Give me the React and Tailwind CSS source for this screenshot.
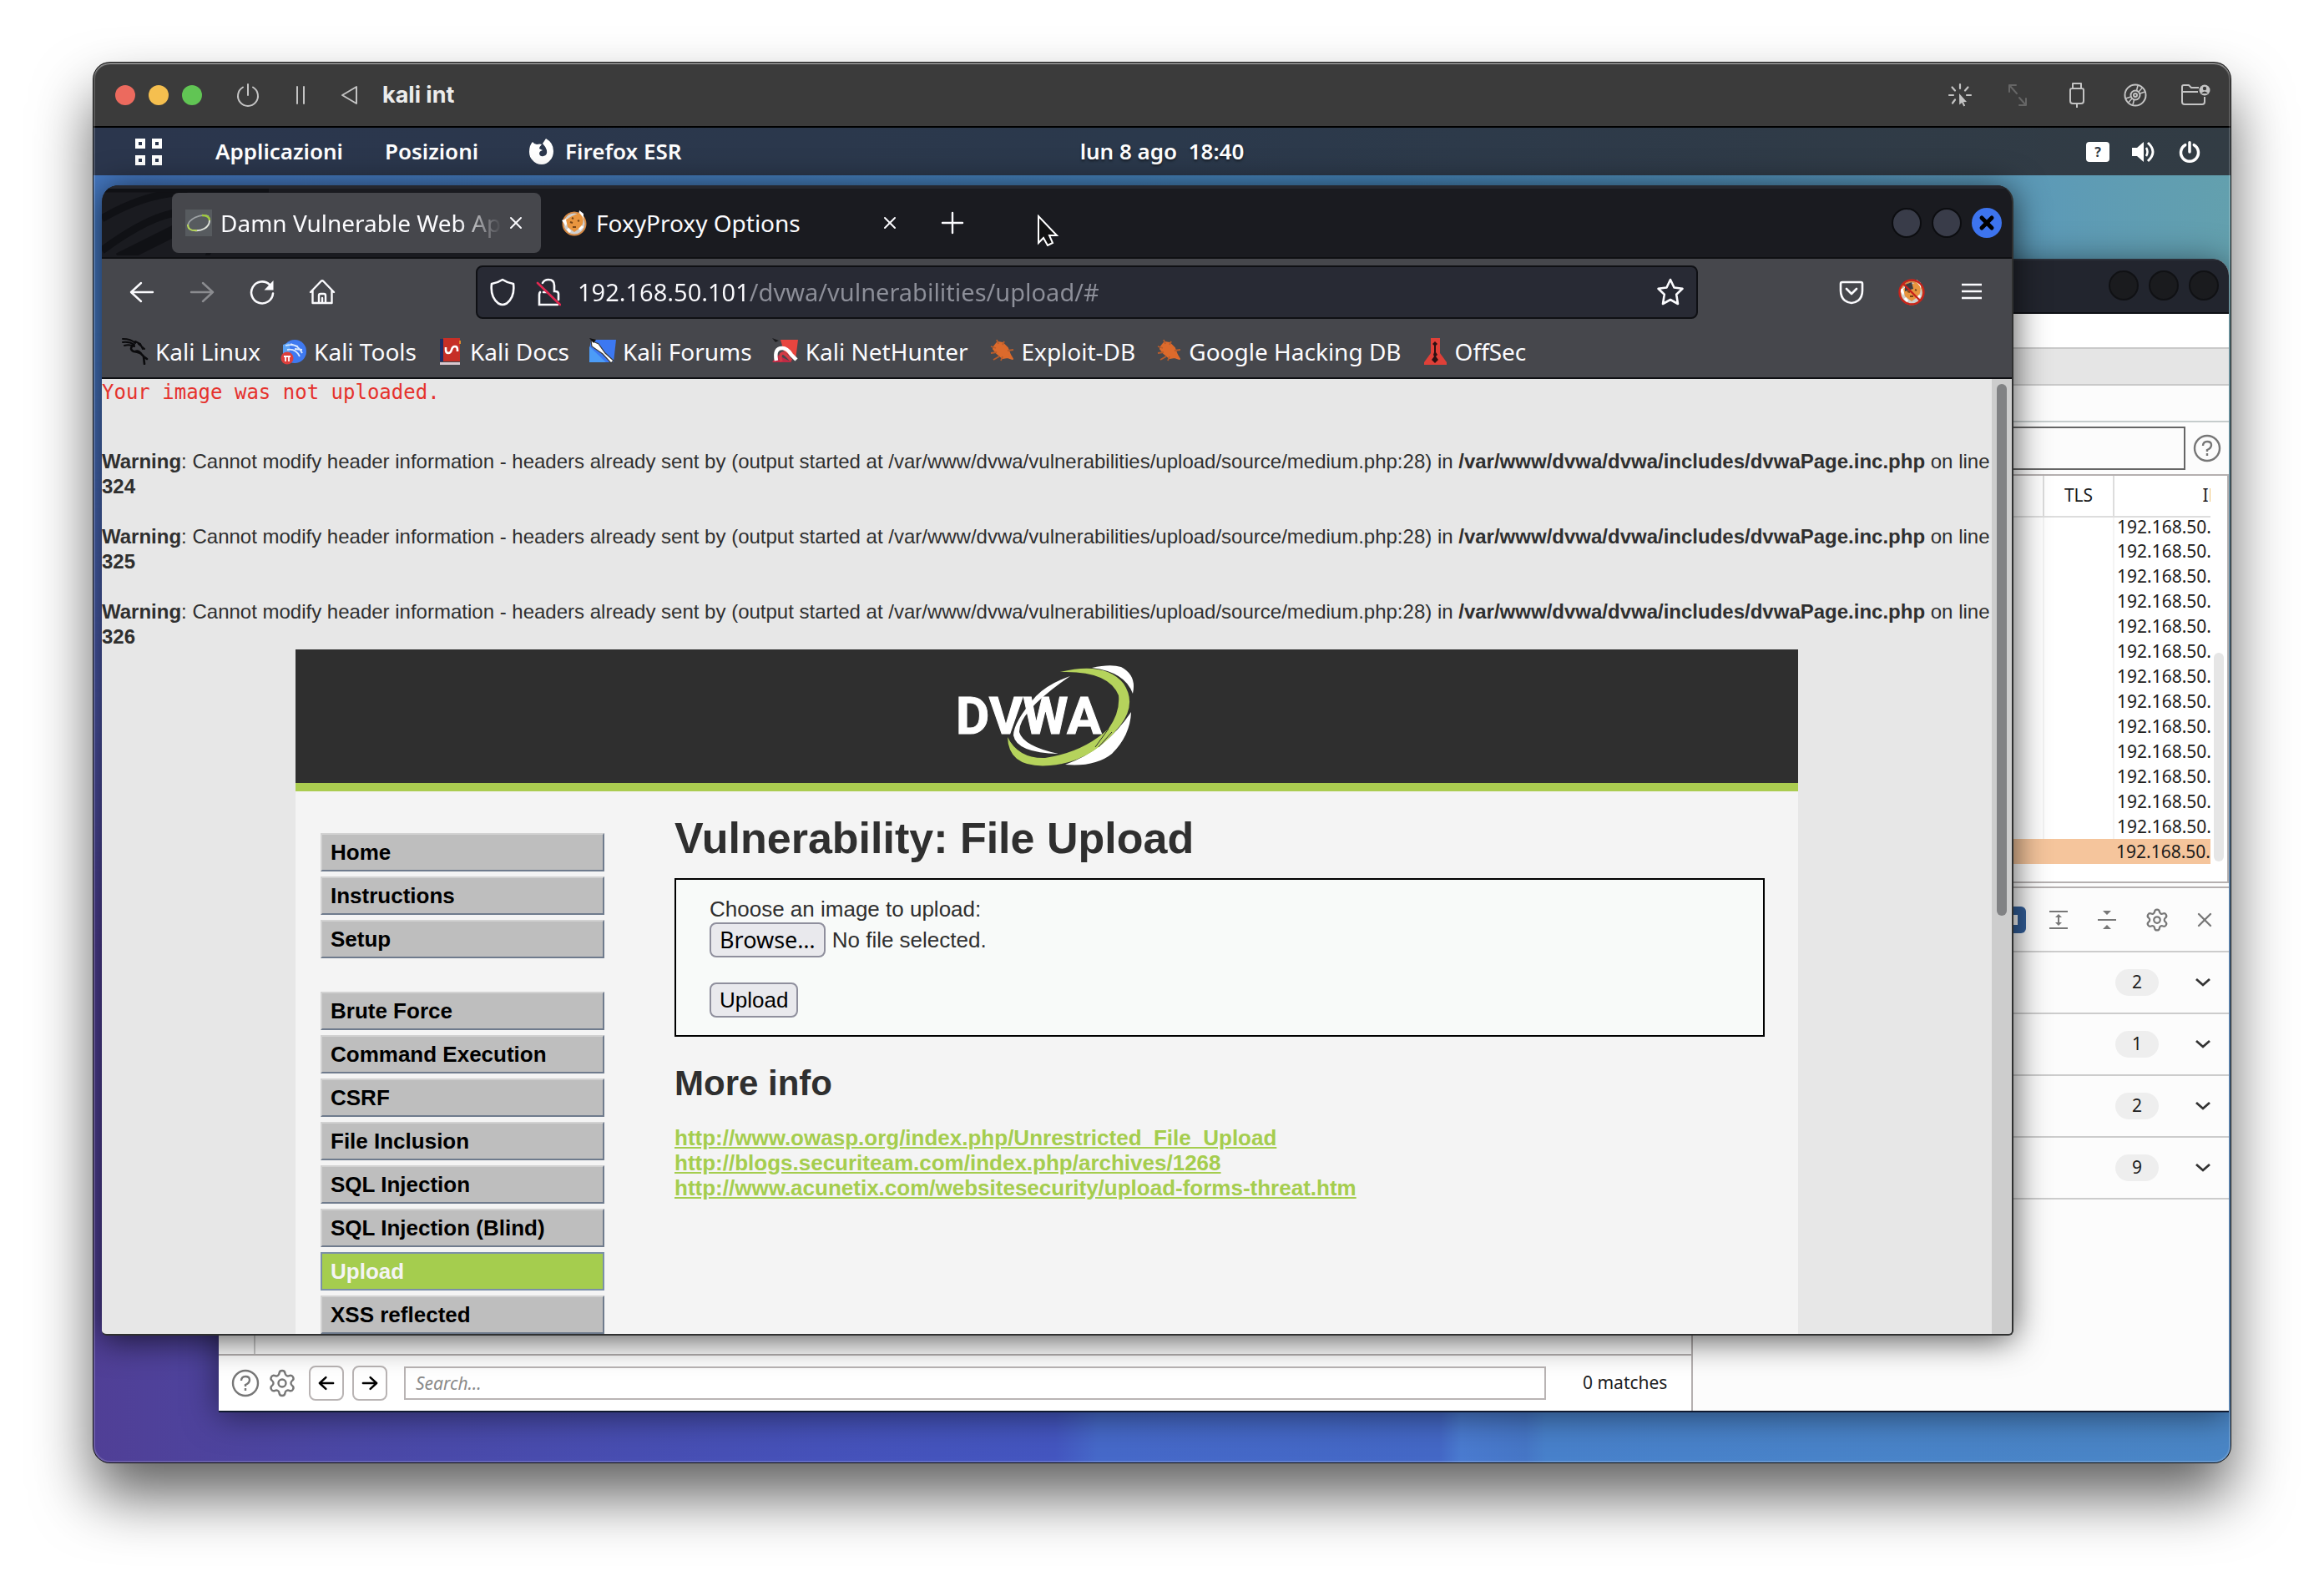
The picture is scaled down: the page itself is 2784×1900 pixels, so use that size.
import React from "react";
import { Settings, X } from "lucide-react";

const uiFont = "font-['Noto_Sans',sans-serif]";

/* ---------- host window icons ---------- */
const Power = ({ className, sw = 2 }) => (
  <svg viewBox="0 0 32 32" className={className} fill="none" stroke="currentColor" strokeWidth={sw} strokeLinecap="round">
    <path d="M16 3v13M10 6.5a12 12 0 1 0 12 0" />
  </svg>
);
const Pause = () => (
  <svg viewBox="0 0 16 24" className="h-6 w-4" stroke="currentColor" strokeWidth="2" strokeLinecap="round">
    <path d="M4 2v20M12 2v20" />
  </svg>
);
const Triangle = () => (
  <svg viewBox="0 0 22 24" className="h-6 w-[22px]" fill="none" stroke="currentColor" strokeWidth="2" strokeLinejoin="round">
    <path d="M19 2v20L2 12z" />
  </svg>
);
const Spark = () => (
  <svg viewBox="0 0 32 32" className="size-8" fill="none" stroke="currentColor" strokeWidth="2.2" strokeLinecap="round">
    <path d="M16 3v5M3 16h5M24 16h5M6.5 6.5l3.5 4M25.500 6.500l-3.500 4M10 21.500l-3 4" />
    <path d="M15 14l9 10-4 .3 2.200 4.200-1.800.9-2.200-4.400-3 2.500z" fill="currentColor" stroke="none" />
  </svg>
);
const Diagonal = () => (
  <svg viewBox="0 0 32 32" className="size-8 text-[#666]" fill="none" stroke="currentColor" strokeWidth="2" strokeLinecap="round" strokeLinejoin="round">
    <path d="M13 4H5v8M5 4l9 10M17 28h8v-8M25 28l-8-9" />
  </svg>
);
const Usb = () => (
  <svg viewBox="0 0 32 32" className="size-8" fill="none" stroke="currentColor" strokeWidth="2" strokeLinejoin="round">
    <path d="M11 8V2h10v6M8 10q0-2 2-2h12q2 0 2 2v13q0 3-3 3H11q-3 0-3-3zM16 26v5" />
  </svg>
);
const Disc = () => (
  <svg viewBox="0 0 32 32" className="size-8" fill="none" stroke="currentColor" strokeWidth="2">
    <circle cx="16" cy="16" r="12.500" />
    <circle cx="16" cy="16" r="5.500" />
    <circle cx="16" cy="16" r="2" />
    <path d="M19 4.500l-1.500 6M24.500 7l-4.500 5M13 27.500l1.500-6M7.500 25l4.500-5M4.500 20l6-2M27.500 12l-6 2" strokeWidth="1.600" />
  </svg>
);
const SharedFolder = () => (
  <svg viewBox="0 0 36 32" className="h-8 w-9" fill="none" stroke="currentColor" strokeWidth="2" strokeLinejoin="round">
    <path d="M22 7H13l-3-3H4q-2 0-2 2v18q0 3 3 3h21q3 0 3-3v-6M2 12h19" />
    <circle cx="29" cy="10" r="6.500" fill="currentColor" stroke="none" />
    <circle cx="29" cy="8" r="2.200" fill="#3b3b3b" stroke="none" />
    <path d="M25 14q4-5 8 0z" fill="#3b3b3b" stroke="none" />
  </svg>
);

/* ---------- guest panel icons ---------- */
const Grid = () => (
  <svg viewBox="0 0 32 32" className="size-8" fill="none" stroke="#fff" strokeWidth="4">
    <path d="M2 2h8v8H2zM22 2h8v8h-8zM2 22h8v8H2zM22 22h8v8h-8z" />
  </svg>
);
const FirefoxGlyph = () => (
  <svg viewBox="0 0 32 32" className="size-8">
    <path d="M5 4q2 3 5 3 4-1 6 0-3 3-3 5l4 2q-4 1-4 4 1 4 5 3 5-1 4-7-1-4-5-8 2-3 4-6 9 5 9 15 0 7-4 11-4 5-10 5-7 0-11-5Q1 22 1 16 1 8 5 4z" fill="#fff" />
  </svg>
);
const Volume = () => (
  <svg viewBox="0 0 30 30" className="h-[30px] w-[30px]" fill="none" stroke="#fff">
    <path d="M1 10h6l8-7v24l-8-7H1z" fill="#fff" stroke="none" />
    <path d="M18 10q3 5 0 10" strokeWidth="2.500" />
    <path d="M20 4q12 11 0 22" strokeWidth="3" />
  </svg>
);

/* ---------- browser icons ---------- */
const Arrow = ({ flip, className }) => (
  <svg viewBox="0 0 32 32" className={className} fill="none" stroke="currentColor" strokeWidth="2.400" strokeLinecap="round" strokeLinejoin="round">
    <path d={flip ? "M3 16h26M17 5l12 11-12 11" : "M29 16H3M15 5L3 16l12 11"} />
  </svg>
);
const Reload = () => (
  <svg viewBox="0 0 32 32" className="size-8" fill="none" stroke="currentColor" strokeWidth="2.600" strokeLinecap="round">
    <path d="M29 17.500A13 13 0 1 1 25 7" />
    <path d="M29.500 2v11.500H18.500z" fill="currentColor" stroke="none" />
  </svg>
);
const Home = () => (
  <svg viewBox="0 0 32 32" className="size-8" fill="none" stroke="currentColor" strokeWidth="2.400" strokeLinecap="round" strokeLinejoin="round">
    <path d="M2 16L14.500 3q1.500-1.500 3 0L30 16M4.500 14v15h23V14M12 29V20q0-2 2-2h4q2 0 2 2v9M16 28v-5" />
  </svg>
);
const Shield = () => (
  <svg viewBox="0 0 32 34" className="h-[34px] w-8" fill="none" stroke="currentColor" strokeWidth="2.600" strokeLinejoin="round">
    <path d="M16 2Q10 6 3 7q-2 16 8 23.500Q14 32 16 32t5-1.500Q31 23 29 7q-7-1-13-5z" />
  </svg>
);
const LockOff = () => (
  <svg viewBox="0 0 30 34" className="h-[34px] w-[30px]" fill="none" stroke="currentColor" strokeWidth="2.600" strokeLinecap="round">
    <path d="M8 6q2-4 7-4 7 0 7 7v7h1q4 0 4 3v7M5 17q-1 1-1 3v12h22M9 17h4" />
    <path d="M2 6l27 26" stroke="#e22850" />
  </svg>
);
const Star = () => (
  <svg viewBox="0 0 34 34" className="size-[34px]" fill="none" stroke="currentColor" strokeWidth="2.600" strokeLinejoin="round">
    <path d="M17 2l4.500 9.500 10 1.300-7.300 7 1.800 11.200L17 26l-9 5 1.800-11.200-7.300-7 10-1.300z" />
  </svg>
);
const Pocket = () => (
  <svg viewBox="0 0 32 32" className="size-8" fill="none" stroke="currentColor" strokeWidth="2.600" strokeLinecap="round" strokeLinejoin="round">
    <path d="M5 4h22q2 0 2 2v8q0 8-5 12-8 6-16 0-5-4-5-12V6q0-2 2-2zM10 12l6 6 6-6" />
  </svg>
);
const Burger = () => (
  <svg viewBox="0 0 32 32" className="size-8" stroke="currentColor" strokeWidth="2.600">
    <path d="M4 7h24M4 15h24M4 23h24" />
  </svg>
);
const Plus = () => (
  <svg viewBox="0 0 32 32" className="size-8" stroke="currentColor" strokeWidth="2.400" strokeLinecap="round">
    <path d="M16 4v24M4 16h24" />
  </svg>
);
const DvwaIcon = () => (
  <svg viewBox="0 0 32 32" className="size-8" fill="none">
    <path d="M0 0h32v32H0z" fill="#575b5f" />
    <path d="M3 20C3 12 18 4 28 8" stroke="#9ea3a5" strokeWidth="1.800" />
    <path d="M20 7q9 0 9 6" stroke="#9fc93f" strokeWidth="2.400" />
    <path d="M29 13c0 9-10 13-18 12" stroke="#dfe3da" strokeWidth="2" />
    <path d="M3 18q0 8 11 7" stroke="#b7d65c" strokeWidth="2" />
  </svg>
);
const FoxIcon = ({ off }) => (
  <svg viewBox="0 0 32 32" className="size-8">
    <circle cx="16" cy="17" r="13" fill="#cfcfcf" />
    <circle cx="16" cy="17" r="13.500" fill="none" stroke="#d88b45" strokeWidth="2" />
    <path d="M1 13l8-3-3 10zM22 1l5 4v6l-6-3z" fill="#fff" />
    <path d="M6 12l7-4 9-4 4 5q2 8-3 13l-7 5-8-6z" fill="#e8953f" />
    <path d="M11 15l3 1M20 13l2 1M14 21h4M13 10l2 1" stroke="#754417" strokeWidth="2" />
    <path d="M22 24l4-4M8 23l3 4" stroke="#fff" strokeWidth="3" />
    {off && (
      <g fill="none" stroke="#c8231b" strokeWidth="2.400">
        <path d="M8 7l8-3 2 8-10 3z" fill="#3b3c42" stroke="none" />
        <circle cx="16" cy="16" r="14.500" />
        <path d="M6 6l20 20" />
      </g>
    )}
  </svg>
);
const icons = {
  linux: (
    <svg viewBox="0 0 32 32" className="size-8" fill="none" stroke="#0b0b0d" strokeLinecap="round">
      <path d="M1 1q10 0 15 5M1 5q8-1 14 3M3 9q6-2 12 1M16 4l6 3 3 6M20 7l7 6" strokeWidth="2" />
      <path d="M14 8q-6 5 0 8 9 1 12 6l4 3M26 22l1 9M16 16q4-2 8 4" strokeWidth="2.600" />
    </svg>
  ),
  tools: (
    <svg viewBox="0 0 32 32" className="size-8">
      <circle cx="17" cy="16" r="14" fill="#3f79f0" />
      <path d="M3 20V8l8-3v18z" fill="#5aa2f5" />
      <path d="M6 9q14-4 20 9M8 14q10-2 15 8M17 13l9 1M12 7l9 3" fill="none" stroke="#dbe9ff" strokeWidth="1.800" />
      <circle cx="8" cy="24" r="7.500" fill="#dc3f3c" />
      <path d="M4 22h8M6 22v6M10 22v6" stroke="#fff" strokeWidth="1.800" />
    </svg>
  ),
  docs: (
    <svg viewBox="0 0 32 32" className="size-8">
      <path d="M4 1h4v27H4z" fill="#1f2c66" />
      <path d="M8 0h20v28H8z" fill="#c62f27" />
      <path d="M27 3h2v4h-2z" fill="#e08a2c" />
      <path d="M4 29h24v3H4z" fill="#d9c8cf" />
      <path d="M11 11v3q0 4 3 4t4-4 4-4 3 4v2" fill="none" stroke="#fff" strokeWidth="2.600" />
    </svg>
  ),
  forums: (
    <svg viewBox="0 0 32 32" className="size-8">
      <path d="M2 2h30l-3 27H0V14z" fill="#3c78f2" />
      <path d="M0 10v19h20z" fill="#4c9cf7" />
      <path d="M2 3l9 4 8 11 10 9-3 3-10-11L3 10z" fill="#fff" stroke="#3a3a3a" strokeWidth="1.200" />
      <path d="M0 0l8 2-3 4z" fill="#111" />
    </svg>
  ),
  nethunter: (
    <svg viewBox="0 0 32 32" className="size-8">
      <path d="M10 2h21l-3 24-14-10z" fill="#e8453f" />
      <path d="M0 29l6-9 18 9z" fill="#c02a45" />
      <path d="M5 27q-3-15 7-15 6 0 11 8l6 6" fill="none" stroke="#fff" strokeWidth="4.500" />
      <path d="M11 28q-3-9 2-10 3 1 10 9" fill="none" stroke="#d43a44" strokeWidth="3.500" />
      <path d="M0 0l8 3-4 2z" fill="#1b1b1d" />
    </svg>
  ),
  exploit: (
    <svg viewBox="0 0 32 32" className="size-8">
      <path d="M7 10l4-5 6 1 6 6 3 8 3 5-6-2-6 1-7-6-4-5z" fill="#dc6a2c" stroke="#dc6a2c" strokeWidth="2" strokeLinejoin="round" />
      <path d="M3 10l6 2M3 18l7-1M6 26l7-4M15 27l2-5M10 2l2 5M19 4l-2 4M30 14l-7 1" stroke="#b85c2b" strokeWidth="1.800" />
    </svg>
  ),
  offsec: (
    <svg viewBox="0 0 32 32" className="size-8">
      <path d="M11 0h11v18l8 11v3H3v-3l8-11z" fill="#df4038" />
      <path d="M16 4l3 3-2 2v8l2 3-2 2 3 4-4 4-4-4 3-4-1-2 1-3V9l-2-2z" fill="#2b1012" />
    </svg>
  ),
};
const bookmarks = [
  ["linux", "Kali Linux"],
  ["tools", "Kali Tools"],
  ["docs", "Kali Docs"],
  ["forums", "Kali Forums"],
  ["nethunter", "Kali NetHunter"],
  ["exploit", "Exploit-DB"],
  ["exploit", "Google Hacking DB"],
  ["offsec", "OffSec"],
];

const DvwaLogo = () => (
  <svg viewBox="-4 0 220 122" className="h-[122px] w-[220px]" role="img" aria-label="DVWA">
    <g fill="#fff">
      <path d="M134 13Q108 22 93 37 66 68 66 84 70 105 120 106 78 97 73 80 72 56 134 13z" />
      <path d="M160 3Q182-2 195 2 214 12 209 34 200 8 160 3z" />
      <path d="M207 56Q206 84 184 106 164 122 128 119 176 102 207 56z" />
    </g>
    <path d="M122 8Q176-5 198 22 214 46 194 72 160 116 110 120 60 124 59 86 72 112 104 111 150 104 180 76 194 56 192 36 180 6 122 8z" fill="#b5d35c" />
    <path d="M180 76l-16 22M184 80l-16 18" stroke="#2f2f2f" />
    <text x="-3" y="82" fill="#fff" stroke="#fff" strokeWidth="1" className="font-['Roboto',sans-serif] text-[62px] font-bold">DVWA</text>
  </svg>
);

const warnings = [324, 325, 326];
const menu = [
  ["Home", "Instructions", "Setup"],
  ["Brute Force", "Command Execution", "CSRF", "File Inclusion", "SQL Injection", "SQL Injection (Blind)", "Upload", "XSS reflected"],
];
const links = [
  "http://www.owasp.org/index.php/Unrestricted_File_Upload",
  "http://blogs.securiteam.com/index.php/archives/1268",
  "http://www.acunetix.com/websitesecurity/upload-forms-threat.htm",
];

function DvwaPage() {
  return (
    <main className="min-w-0 flex-1 overflow-hidden bg-[#e7e7e7] font-['Liberation_Sans',Arial,sans-serif] text-[#2f2f2f]">
      <pre className="mb-[52px] font-['DejaVu_Sans_Mono',monospace] text-2xl leading-[32px] text-[#e5322d]">Your image was not uploaded.</pre>
      <div className="flex flex-col gap-[30px] text-2xl leading-[30px]">
        {warnings.map((n) => (
          <p key={n}>
            <b>Warning</b>: Cannot modify header information - headers already sent by (output started at /var/www/dvwa/vulnerabilities/upload/source/medium.php:28) in <b>/var/www/dvwa/dvwa/includes/dvwaPage.inc.php</b> on line <b>{n}</b>
          </p>
        ))}
      </div>
      <div className="mx-auto max-w-[1800px] bg-[#f4f4f4] text-[26px] leading-[30px]">
        <header className="flex h-[170px] items-center justify-center border-b-[10px] border-[#abcc50] bg-[#2f2f2f]">
          <DvwaLogo />
        </header>
        <div className="flex items-start gap-[84px] pt-[26px] pr-10 pl-[30px]">
          <nav className="flex w-[340px] shrink-0 flex-col gap-10 pt-6 font-bold">
            {menu.map((group) => (
              <ul key={group[0]} className="flex flex-col gap-[6px]">
                {group.map((m) => (
                  <li key={m}>
                    <a
                      href="#"
                      className={
                        m === "Upload"
                          ? "block h-[46px] border-2 border-[#7b8fa8] bg-[#a5cd4e] px-[10px] leading-[42px] text-[#f4f4f4]"
                          : "block h-[46px] border-2 border-t-[#d2d2d2] border-r-[#6f7b8d] border-b-[#6f7b8d] border-l-[#d2d2d2] bg-[#bebebe] px-[10px] leading-[42px] text-black"
                      }
                    >
                      {m}
                    </a>
                  </li>
                ))}
              </ul>
            ))}
          </nav>
          <section className="min-w-0 flex-1">
            <h1 className="mb-[18px] text-[52px] leading-[60px] font-bold">Vulnerability: File Upload</h1>
            <form className="h-[190px] border-2 border-black bg-[#f8faf9] px-10 pt-[19px] text-[26px]" onSubmit={(e) => e.preventDefault()}>
              <p className="leading-8">Choose an image to upload:</p>
              <div className="flex items-center gap-2">
                <input id="file" type="file" className="sr-only" />
                <label htmlFor="file" className="flex h-[42px] items-center rounded-lg border-2 border-[#8f8f9d] bg-[#e9e9ed] px-[10px] font-['Noto_Sans',sans-serif] text-[27px] text-black">Browse…</label>
                <span>No file selected.</span>
              </div>
              <button className="mt-[30px] flex h-[42px] items-center rounded-lg border-2 border-[#8f8f9d] bg-[#e9e9ed] px-[10px] text-black">Upload</button>
            </form>
            <h2 className="mt-8 mb-[26px] text-[42px] leading-[48px] font-bold">More info</h2>
            <ul className="font-bold text-[#a5cd4e]">
              {links.map((l) => (
                <li key={l}>
                  <a href={l} className="underline">{l}</a>
                </li>
              ))}
            </ul>
          </section>
        </div>
      </div>
    </main>
  );
}

function Browser() {
  return (
    <section className={`absolute top-3 right-[260px] bottom-[152px] left-[10px] flex flex-col overflow-hidden rounded-t-[20px] rounded-b-[6px] border-r-2 border-b-2 border-[#2f3030] bg-[#46474c] text-[28px] text-[#fbfbfe] shadow-[0_4px_40px_rgba(0,0,0,0.7)] ${uiFont}`}>
      <div className="relative flex h-[88px] shrink-0 items-center border-t-4 border-b-2 border-t-[#25272e] border-b-[#0f1013] bg-[#1a1b20] pl-[84px]">
        <svg className="absolute top-0 left-0 h-20 w-[200px]" viewBox="0 0 200 80" fill="none" stroke="#101115">
          <path d="M0 36Q50 6 100 4M0 74Q60 30 96 28" strokeWidth="9" />
          <path d="M0 2h200M94 0l10 10M124 84l14-24" strokeWidth="5" />
          <path d="M20 84l80-40" strokeWidth="14" />
        </svg>
        <div className="relative flex h-[72px] w-[442px] items-center gap-[10px] rounded-lg bg-[#46474c] pl-4">
          <DvwaIcon />
          <span className="w-[340px] overflow-hidden whitespace-nowrap [mask-image:linear-gradient(to_right,black_84%,transparent_99%)]">Damn Vulnerable Web App</span>
          <button aria-label="Close tab" className="-ml-2"><X className="size-6" strokeWidth={2} /></button>
        </div>
        <div className="flex h-[72px] w-[454px] items-center gap-[10px] pl-6">
          <FoxIcon />
          <span className="w-[330px]">FoxyProxy Options</span>
          <button aria-label="Close tab"><X className="size-6" strokeWidth={2} /></button>
        </div>
        <button aria-label="New tab" className="ml-[23px]"><Plus /></button>
        <div className="mr-3 ml-auto flex gap-3">
          <button aria-label="Minimize" className="size-9 rounded-full border-2 border-[#0c0d10] bg-[#393c49]" />
          <button aria-label="Maximize" className="size-9 rounded-full border-2 border-[#0c0d10] bg-[#393c49]" />
          <button aria-label="Close" className="grid size-9 place-items-center rounded-full bg-[#3d74ee] text-black"><X className="size-6" strokeWidth={5} /></button>
        </div>
      </div>
      <div className="flex h-20 shrink-0 items-center">
        <div className="ml-8 flex w-[438px] items-center gap-10">
          <button aria-label="Back"><Arrow className="size-8" /></button>
          <button aria-label="Forward" className="text-[#8b8c90]"><Arrow flip className="size-8" /></button>
          <button aria-label="Reload"><Reload /></button>
          <button aria-label="Home"><Home /></button>
        </div>
        <div className="-ml-[22px] flex h-16 max-w-[1464px] min-w-0 flex-1 items-center rounded-lg border-2 border-[#0f1014] bg-[#282a34] px-[14px]">
          <Shield />
          <span className="ml-6"><LockOff /></span>
          <input
            aria-label="Address"
            defaultValue="192.168.50.101/dvwa/vulnerabilities/upload/#"
            className="mx-5 min-w-0 flex-1 bg-[linear-gradient(to_right,#fbfbfe_206px,#8d8f99_206px)] bg-clip-text text-[29px] text-transparent outline-none"
          />
          <Star />
        </div>
        <div className="mr-8 ml-auto flex gap-10">
          <button aria-label="Pocket"><Pocket /></button>
          <button aria-label="FoxyProxy"><FoxIcon off /></button>
          <button aria-label="Menu"><Burger /></button>
        </div>
      </div>
      <nav className="flex h-16 shrink-0 items-center gap-6 border-b-2 border-[#0f1013] pl-6 whitespace-nowrap">
        {bookmarks.map(([icon, label]) => (
          <a key={label} href="#" className="flex items-center gap-2">
            {icons[icon]}
            {label}
          </a>
        ))}
      </nav>
      <div className="flex min-h-0 flex-1">
        <DvwaPage />
        <div className="w-6 shrink-0 bg-[#cdcdcd] px-[6px] pt-[6px]">
          <div className="h-[56%] rounded-full bg-[#818284]" />
        </div>
      </div>
      <svg className="absolute top-[35px] left-[1120px] h-[38px] w-7" viewBox="0 0 28 38">
        <path d="M2 2v32l6-6 5 9 6-3-4-9h9z" fill="#111" stroke="#fff" strokeWidth="2" />
      </svg>
    </section>
  );
}

const Help = () => (
  <svg viewBox="0 0 34 34" className="size-[34px] shrink-0" fill="none" stroke="#777" strokeWidth="2.400">
    <circle cx="17" cy="17" r="15" />
    <path d="M12 14q0-5 5-5t5 4-5 6v2M17 23v3" />
  </svg>
);
const ExpandAll = () => (
  <svg viewBox="0 0 26 26" className="size-[26px]" fill="#777">
    <path d="M2 2h22v2H2zM2 22h22v2H2zM13 6l4 4h-3v6h3l-4 4-4-4h3v-6H9z" />
  </svg>
);
const CollapseAll = () => (
  <svg viewBox="0 0 26 26" className="size-[26px]" fill="#777">
    <path d="M2 12h22v2H2zM8 2h10l-5 5zM8 24h10l-5-5z" />
  </svg>
);
const Chevron = () => (
  <svg viewBox="0 0 20 14" className="h-[14px] w-5" fill="none" stroke="#333" strokeWidth="2.800">
    <path d="M2 3l8 7 8-7" />
  </svg>
);

function Proxy() {
  return (
    <section className={`absolute top-[100px] right-[2px] bottom-[60px] left-[150px] flex flex-col overflow-hidden rounded-t-[20px] border-b-2 border-[#101a30] bg-white text-[21px] text-[#1d1d1d] shadow-[0_4px_40px_rgba(0,0,0,0.5)] ${uiFont}`}>
      <div className="flex h-[66px] shrink-0 items-start justify-end gap-3 border-t-2 border-b-2 border-t-[#2b303a] border-b-[#0f1116] bg-[#22252e] pt-3 pr-3">
        {["Minimize", "Maximize", "Close"].map((l) => (
          <button key={l} aria-label={l} className="size-9 rounded-full border-2 border-[#101114] bg-[#1a1b1e]" />
        ))}
      </div>
      <div className="h-[42px] shrink-0 border-b-2 border-[#c9c9c9]" />
      <div className="h-11 shrink-0 border-b-2 border-[#c9c9c9] bg-[#e5e5e5]" />
      <div className="h-11 shrink-0 border-b-2 border-[#c5cccc] bg-[#fcfcfc]" />
      <div className="flex h-16 shrink-0 items-center gap-[9px] border-b-2 border-[#b5b0b0] bg-[#fcfcfc] pr-[9px]">
        <input aria-label="Filter" className="h-[52px] min-w-0 flex-1 border-2 border-[#666] bg-[#fcfcfc]" />
        <Help />
      </div>
      <div className="flex h-[488px] shrink-0 border-r-2 border-b-2 border-[#b5b0b0]">
        <div className="min-w-0 flex-1 overflow-hidden">
          <table className="w-[calc(100%+116px)] table-fixed border-collapse">
            <thead>
              <tr className="h-[49px] border-b-2 border-[#ddd]">
                <th className="border-r-2 border-[#ddd]" />
                <th className="w-[84px] border-r-2 border-[#ddd] font-normal">TLS</th>
                <th className="w-[232px] font-normal">IP</th>
              </tr>
            </thead>
            <tbody>
              {Array.from({ length: 14 }, (_, i) => (
                <tr key={i} className={i === 13 ? "bg-[#f5c59c]" : ""}>
                  <td className={i === 13 ? "p-0" : "border-r-2 border-[#f4f4f4] p-0"} />
                  <td className={i === 13 ? "p-0" : "border-r-2 border-[#f4f4f4] p-0"} />
                  <td className={i === 0 ? "h-[26px] py-0 pl-[3px] align-top leading-[22px]" : "h-[30px] py-0 pl-[3px] leading-[30px]"}>192.168.50.</td>
                </tr>
              ))}
            </tbody>
          </table>
        </div>
        <div className="flex w-5 flex-col items-center justify-end pb-6">
          <div className="h-[250px] w-3 rounded-full bg-[#e6e6e6]" />
        </div>
      </div>
      <div className="flex min-h-0 flex-1">
        <div className="flex min-w-0 flex-1 flex-col">
          <div className="flex-1 border-b-2 border-[#b5b0b0] pl-[42px]">
            <div className="h-full border-l-2 border-[#ccc]" />
          </div>
          <div className="flex h-[66px] shrink-0 items-center pl-[15px]">
            <button aria-label="Help"><Help /></button>
            <button aria-label="Settings" className="ml-[9px]"><Settings className="size-9 text-[#777]" strokeWidth={1.6} /></button>
            <button aria-label="Previous" className="ml-[14px] grid h-[42px] w-[42px] place-items-center rounded-lg border-2 border-[#b9b4b4] text-black"><Arrow className="size-5 [stroke-width:4]" /></button>
            <button aria-label="Next" className="ml-[10px] grid h-[42px] w-[42px] place-items-center rounded-lg border-2 border-[#b9b4b4] text-black"><Arrow flip className="size-5 [stroke-width:4]" /></button>
            <input aria-label="Search" placeholder="Search…" className="ml-5 h-10 min-w-0 flex-1 border-2 border-[#b9b4b4] bg-white px-3 italic placeholder:text-[#8a8a8a]" />
            <span className="w-[174px] pl-[44px]">0 matches</span>
          </div>
        </div>
        <aside className="w-[644px] shrink-0 border-l-2 border-[#b5b0b0] bg-[#fcfcfc]">
          <div className="mt-1 flex h-[79px] items-center justify-end gap-8 border-t-2 border-b-2 border-t-[#b5b0b0] border-b-[#ccc] pr-[15px]">
            <button aria-label="Panel layout" className="mr-[-6px] grid size-8 place-items-center rounded-md bg-[#33609c]"><span className="block size-3 bg-white" /></button>
            <button aria-label="Expand all"><ExpandAll /></button>
            <button aria-label="Collapse all"><CollapseAll /></button>
            <button aria-label="Settings" className="-mr-1"><Settings className="size-[30px] text-[#777]" strokeWidth={1.8} /></button>
            <button aria-label="Close panel"><X className="size-7 text-[#777]" strokeWidth={2} /></button>
          </div>
          {["2", "1", "2", "9"].map((n, i) => (
            <button key={i} className="flex h-[74px] w-full items-center justify-end border-b-2 border-[#ccc] pr-[21px]">
              <span className="mr-[43px] flex h-8 w-[52px] items-center justify-center rounded-full bg-[#eee]">{n}</span>
              <Chevron />
            </button>
          ))}
        </aside>
      </div>
    </section>
  );
}

export default function App() {
  return (
    <div className="flex min-h-screen bg-white px-28 pt-[75px] pb-[148px]">
      <div className="relative flex flex-1 flex-col overflow-hidden rounded-[20px] bg-[#3b3b3b] shadow-[0_0_0_1px_#111,0_40px_70px_rgba(0,0,0,0.62)]">
        <header className="flex h-[78px] shrink-0 items-center border-b-2 border-black pt-[2px] pr-6 pl-[26px] text-[#c4c4c4]">
          <div className="flex gap-4">
            <button aria-label="Close window" className="size-6 rounded-full bg-[#ec6a5e]" />
            <button aria-label="Minimize window" className="size-6 rounded-full bg-[#f5bf4f]" />
            <button aria-label="Zoom window" className="size-6 rounded-full bg-[#61c554]" />
          </div>
          <button aria-label="Shut down" className="ml-[39px]"><Power className="size-8" /></button>
          <button aria-label="Pause" className="ml-[39px]"><Pause /></button>
          <button aria-label="Start" className="ml-10"><Triangle /></button>
          <h1 className="ml-7 font-['Inter',sans-serif] text-[27px] font-bold text-[#ececec]">kali int</h1>
          <div className="ml-auto flex items-center gap-[38px]">
            <button aria-label="Capture pointer"><Spark /></button>
            <button aria-label="Resize"><Diagonal /></button>
            <button aria-label="USB"><Usb /></button>
            <button aria-label="Disc"><Disc /></button>
            <button aria-label="Shared folder"><SharedFolder /></button>
          </div>
        </header>
        <div className={`grid h-[57px] shrink-0 grid-cols-[1fr_auto_1fr] items-center bg-linear-to-r from-[#2b364d] via-[#2b394c] to-[#323c44] text-[26px] font-semibold text-white [text-shadow:0_2px_3px_rgba(0,0,0,0.5)] ${uiFont}`}>
          <div className="flex items-center pl-[50px]">
            <button aria-label="Activities"><Grid /></button>
            <button className="ml-16">Applicazioni</button>
            <button className="ml-[50px]">Posizioni</button>
            <button className="ml-[60px] flex items-center gap-3"><FirefoxGlyph />Firefox ESR</button>
          </div>
          <time className="whitespace-pre">lun 8 ago  18:40</time>
          <div className="flex items-center justify-end gap-[26px] pr-[35px]">
            <span className="grid h-6 w-7 place-items-center rounded-sm bg-white text-base leading-6 font-bold text-[#2f3a44] [text-shadow:none]">?</span>
            <Volume />
            <Power className="size-7" sw={4} />
          </div>
        </div>
        <div className="relative flex-1 bg-[linear-gradient(to_right,#503f96_0%,#4b48a6_12%,#4652ba_34%,#4456c0_45%,#4669c9_47%,#4468c6_63%,#4a7bd0_64%,#4676c6_67%,#4881cb_68%,#4a86c6_100%)]">
          <div className="absolute inset-0 bg-[linear-gradient(to_right,#4477c0_0%,#4584b8_60%,#5a98ba_88%,#63a0ae_100%)] [mask-image:linear-gradient(to_bottom,black_0%,black_12%,transparent_60%)]" />
          <Proxy />
          <Browser />
        </div>
        <div className="pointer-events-none absolute inset-0 rounded-[20px] shadow-[inset_0_2px_1px_rgba(255,255,255,0.3),inset_0_0_0_2px_rgba(255,255,255,0.16)]" />
      </div>
    </div>
  );
}
